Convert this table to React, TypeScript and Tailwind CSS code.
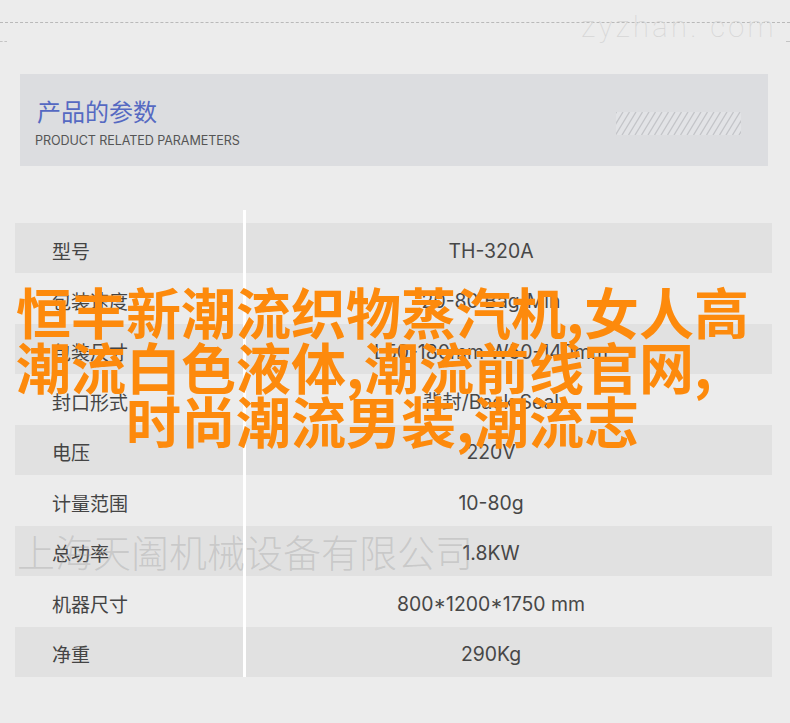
import React from "react";

const rows: [string, string][] = [
  ["型号", "TH-320A"],
  ["包装速度", "20-80 Bag/Min"],
  ["包装尺寸", "L50-180mm W50-140mm"],
  ["封口形式", "背封/Back Seal"],
  ["电压", "220V"],
  ["计量范围", "10-80g"],
  ["总功率", "1.8KW"],
  ["机器尺寸", "800*1200*1750 mm"],
  ["净重", "290Kg"],
];

const cjk = "font-['Noto_Sans_CJK_SC','Noto_Sans',sans-serif]";

function Hatch() {
  const lines = [];
  for (let x = -20; x < 130; x += 6.5) {
    lines.push(<line key={x} x1={x} y1={23} x2={x + 14} y2={0} stroke="#c3c4c8" strokeWidth={1.3} />);
  }
  return (
    <svg width="125" height="23" viewBox="0 0 125 23" className="block">
      <rect x="0" y="0" width="125" height="23" fill="#e2e3e6" />
      {lines}
    </svg>
  );
}

export default function App() {
  return (
    <div className={`relative w-[790px] h-[723px] overflow-hidden bg-[#ececec] ${cjk}`}>
      {/* top dashed line */}
      <div className="pt-[22px]">
        <div className="h-0 border-t border-dashed border-[#b9b9b9]" />
      </div>
      <div className="absolute left-0 top-[41px] w-[7px] border-t border-dashed border-[#c4c4c4]" />
      <div className="absolute right-0 top-[41px] w-[4px] border-t border-dashed border-[#c4c4c4]" />
      <div className="absolute right-[13px] top-[7px] font-['Roboto',sans-serif] font-thin text-[29px] leading-[40px] tracking-[3.4px] text-[#d6d6d6]">
        zyzhan. com
      </div>

      {/* header box */}
      <div className="mt-[51px] ml-[20px] w-[748px] h-[92px] bg-[#dcdde0] flex items-start justify-between">
        <div className="pl-[17px] pt-[22px]">
          <div className="text-[24px] leading-[30px] text-[#5569c2]">产品的参数</div>
          <div className="mt-[8px] -ml-[2px] font-['Inter',sans-serif] text-[12.6px] leading-[14px] text-[#555555] tracking-[-0.1px]">
            PRODUCT RELATED PARAMETERS
          </div>
        </div>
        <div className="mt-[38px] mr-[27px]">
          <Hatch />
        </div>
      </div>

      {/* table */}
      <div className="relative mt-[57px] ml-[15px] w-[757px]">
        <div className="grid grid-rows-9 h-[454px]">
          {rows.map(([k, v], i) => (
            <div
              key={k}
              className={`grid grid-cols-[231px_1fr] items-center ${i % 2 === 0 ? "bg-[#e1e1e1]" : "bg-transparent"}`}
            >
              <div className="pl-[37px] pt-[5px] text-[19px] leading-[24px] text-[#444444]">{k}</div>
              <div className="pr-[36px] pt-[5px] text-center font-['Inter','Noto_Sans_CJK_SC',sans-serif] text-[19.4px] leading-[24px] text-[#474747]">
                {v}
              </div>
            </div>
          ))}
        </div>
        <div className="absolute left-[228px] top-[-13px] bottom-0 w-[3px] bg-white" />
      </div>

      {/* gray watermark */}
      <div className="absolute left-[17px] top-[529px] text-[38px] leading-[44px] font-light whitespace-nowrap text-[rgba(150,150,150,0.32)]">
        上海天阖机械设备有限公司
      </div>

      {/* orange overlay text */}
      <div className="absolute left-0 top-[283px] font-bold text-[55px] leading-[54.5px] text-[#fd8a0c] whitespace-nowrap">
        <div className="pl-[16px]">恒丰新潮流织物蒸汽机,女人高</div>
        <div className="pl-[16px]">潮流白色液体,潮流前线官网,</div>
        <div className="pl-[126px]">时尚潮流男装,潮流志</div>
      </div>
    </div>
  );
}
